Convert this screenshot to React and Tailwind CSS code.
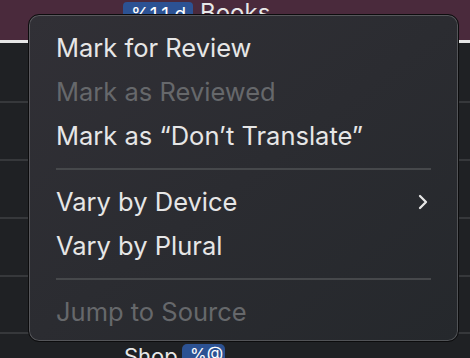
import React from "react";

const items = [
  { label: "Mark for Review" },
  { label: "Mark as Reviewed", disabled: true },
  { label: "Mark as \u201CDon\u2019t Translate\u201D" },
  { sep: true },
  { label: "Vary by Device", submenu: true },
  { label: "Vary by Plural" },
  { sep: true },
  { label: "Jump to Source", disabled: true },
];

function Chevron() {
  return (
    <svg width="14" height="18" viewBox="0 0 14 18" fill="none">
      <path
        d="M4 3 L10 9 L4 15"
        stroke="#e6e6e6"
        strokeWidth="2.3"
        strokeLinecap="round"
        strokeLinejoin="round"
      />
    </svg>
  );
}

export default function App() {
  return (
    <div
      className="relative w-[470px] h-[358px] overflow-hidden bg-[#1f2124]"
      style={{ fontFamily: "Inter, 'Noto Sans', sans-serif" }}
    >
      {/* background list */}
      <div className="h-[40px] bg-[#4a2a3c] flex items-start pl-[123px] gap-[7px]">
        <div className="mt-[2px] h-[16px] w-[70px] px-[8px] rounded-[4px] bg-[#2c5293] text-white text-[19px] leading-[26px] overflow-hidden">
          %1.1.d
        </div>
        <div className="text-[#e8e8e8] text-[24px] leading-[24px] mt-[1px]">Books</div>
      </div>
      <div className="h-[3px] bg-[#e6e6e6]" />
      <div className="h-[60px] border-b-2 border-[#36383b]" />
      <div className="h-[58px] border-b-2 border-[#36383b]" />
      <div className="h-[58px] border-b-2 border-[#36383b]" />
      <div className="h-[58px] border-b-2 border-[#36383b]" />
      <div className="h-[57px] border-b-2 border-[#36383b]" />
      <div className="flex items-start pl-[124px] gap-[6px] pt-[10px]">
        <div className="w-[52px] text-[#e8e8e8] text-[22px] leading-[24px]">Shop</div>
        <div className="h-[22px] w-[43px] px-[8px] rounded-[5px] bg-[#2c5293] text-white text-[17px] leading-[22px]">
          %@
        </div>
      </div>

      {/* context menu */}
      <div className="absolute left-[28px] top-[14px] w-[431px] h-[328px] rounded-[11px] border border-[#0c0c0d] bg-linear-to-br from-[#313036] to-[#25282c] shadow-[inset_0_0_0_1px_rgba(255,255,255,0.2)] pt-[11px] pb-[8px]">
        {items.map((it, i) =>
          it.sep ? (
            <div key={i} className="h-[22px] flex items-center px-[27px]">
              <div className="h-[2px] w-full bg-[#46484b]" />
            </div>
          ) : (
            <div
              key={i}
              className={
                "h-[44px] flex items-center justify-between pl-[27px] pr-[28px] text-[25.5px] " +
                (it.disabled ? "text-[#66686b]" : "text-[#e6e6e6]")
              }
            >
              <span>{it.label}</span>
              {it.submenu && <Chevron />}
            </div>
          )
        )}
      </div>
    </div>
  );
}
